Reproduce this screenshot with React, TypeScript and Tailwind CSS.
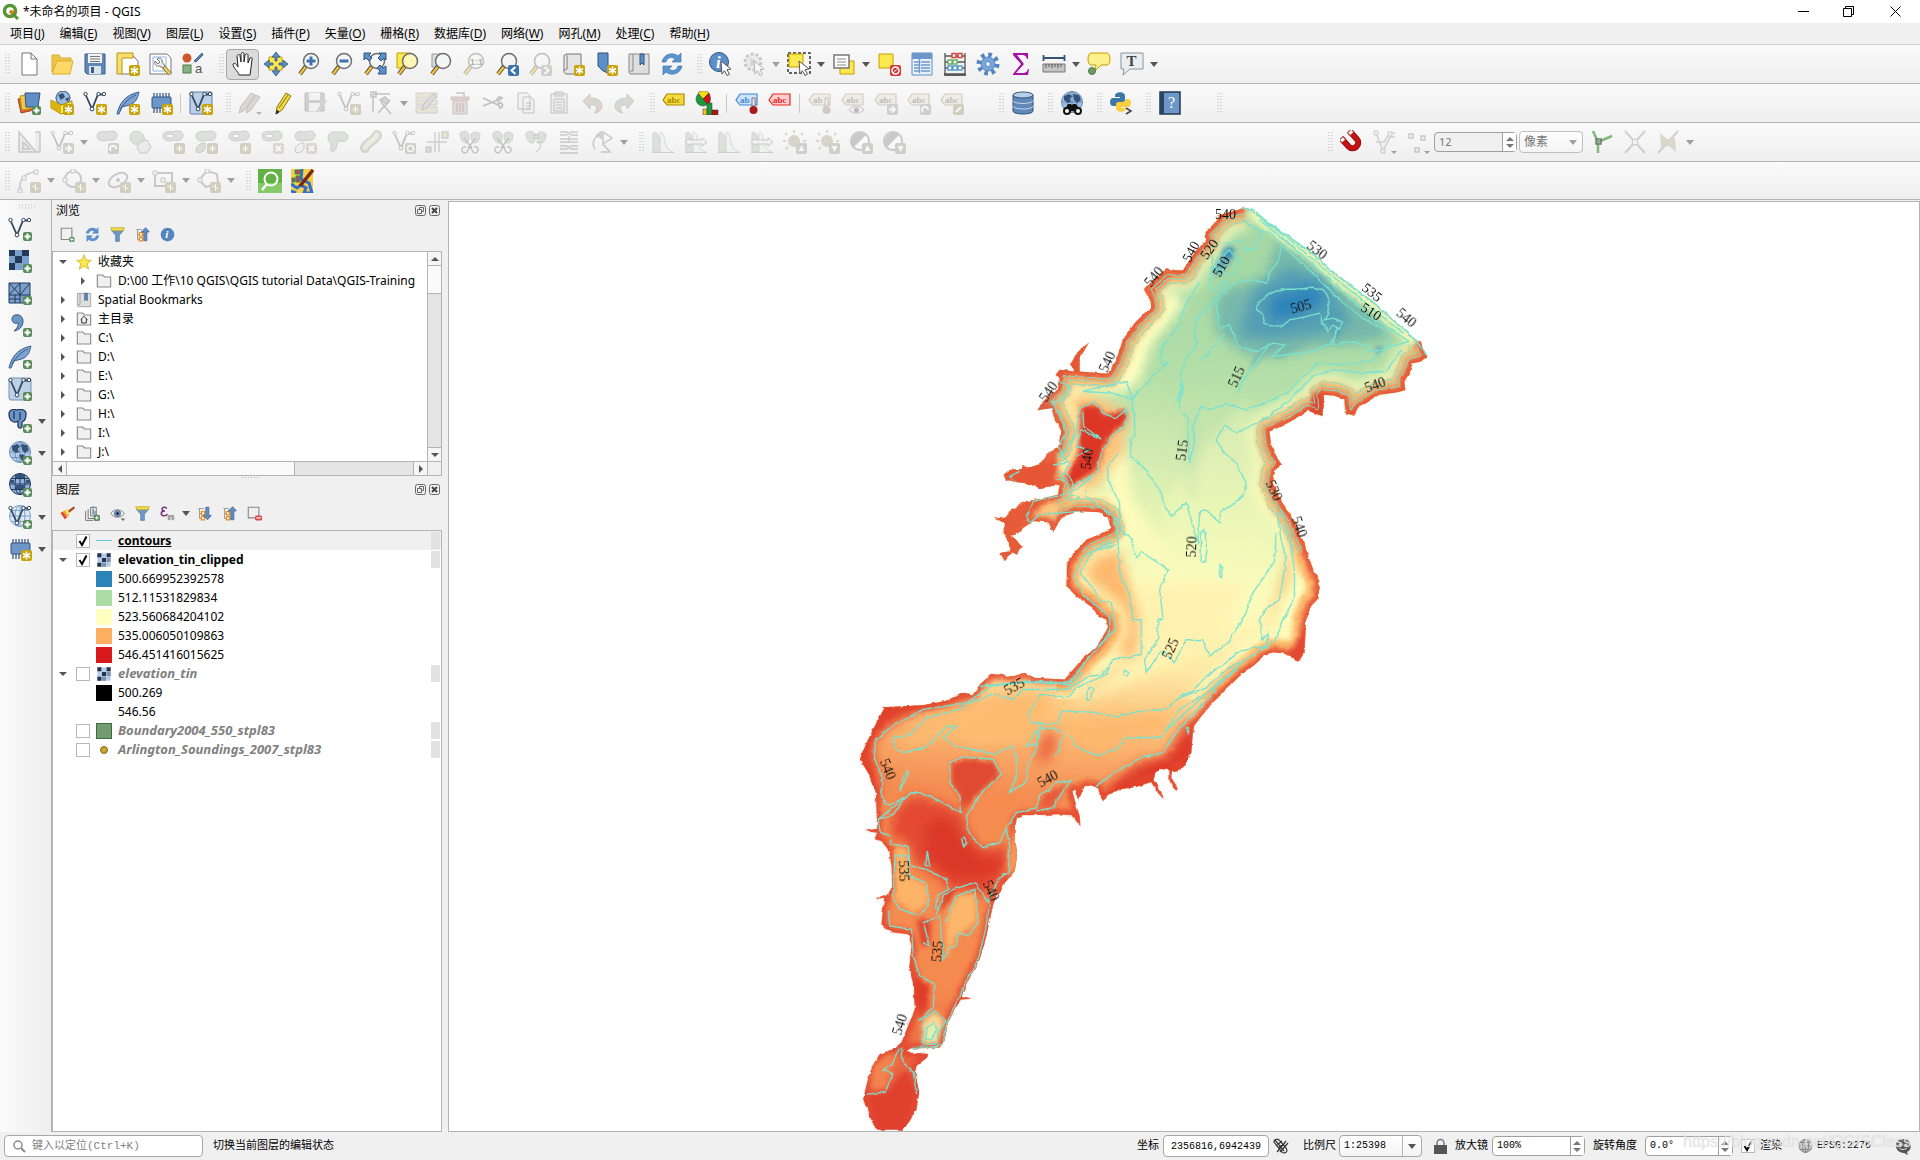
import { useState } from 'react';
import type { ReactNode } from 'react';

const Star = () => (
  <g>
    <rect x="13" y="13" width="11" height="11" rx="2" fill="#c8a30c" />
    <path d="M18.500 14.500v8M15 16.500l7 4M22 16.500l-7 4" stroke="#fff" strokeWidth="1.500" />
  </g>
);

const Plus = () => (
  <g>
    <rect x="15" y="15" width="9" height="9" rx="2" fill="#5a8c5a" />
    <path d="M19.500 16.500v6M16.500 19.500h6" stroke="#fff" strokeWidth="2" />
  </g>
);

const Box = ({ children, color = '#9a9a94' }: { children?: ReactNode; color?: string }) => (
  <g>
    <rect x="13" y="13" width="11" height="11" rx="2" fill={color} />
    {children}
  </g>
);

const Mag = ({ fill = '#f4f6f6' }: { fill?: string }) => (
  <g>
    <path d="M9 14l-6 8" stroke="#444" strokeWidth="4" />
    <path d="M8.500 15L3 22" stroke="#f5c236" strokeWidth="2.500" />
    <circle cx="14" cy="9" r="7.500" fill={fill} stroke="#6e6e6e" strokeWidth="1.500" />
  </g>
);

const Vee = ({ color = '#34495e' }: { color?: string }) => (
  <g fill="#fff" stroke={color}>
    <path d="M2.500 3.500L9 18l6-14.500 6 0" fill="none" strokeWidth="1.800" />
    <circle cx="2.500" cy="3" r="1.700" />
    <circle cx="9" cy="18" r="1.900" />
    <circle cx="15.500" cy="3" r="1.700" />
    <circle cx="21" cy="3" r="1.700" />
  </g>
);

const Feather = () => (
  <path d="M1 23C3 14 8 4 23 1c-1 4-2 9-7 12-4 2-8 2-10 3l-3 7zM4 19C8 12 13 7 20 4" fill="#7ba4d3" stroke="#3d5f88" />
);

const Chip = () => (
  <g>
    <path d="M5 2v20M8 2v20M11 2v20M14 2v20M17 2v20M20 2v20" stroke="#2f4e73" strokeWidth="1.200" />
    <rect x="3" y="6" width="19" height="11" rx="1" fill="#6d97c8" stroke="#34537a" />
  </g>
);

const Globe = ({ fill = '#9dbde0', line = '#34537a' }: { fill?: string; line?: string }) => (
  <g stroke={line} fill="none">
    <circle cx="12" cy="11" r="10.500" fill={fill} />
    <ellipse cx="12" cy="11" rx="5" ry="10.500" />
    <path d="M12 .5v21M1.500 11h21M3 5.500h18M3 16.500h18" />
  </g>
);

const Land = () => (
  <path d="M4 5l5-2 3 2-2 3 1 3-3 1-4-3zM13 3l6 1 2 5-4 3-3-3zM11 14l4-1 2 3-3 4z" fill="#34537a" />
);

const Tag = ({ fill = '#e6e2c8', stroke = '#9a9478', text = 'abc' }: { fill?: string; stroke?: string; text?: string }) => (
  <g>
    <path d="M1 9l4-6h17v11H5z" fill={fill} stroke={stroke} strokeWidth="1.200" />
    <text x="5" y="12" fontSize="9" fontFamily="Liberation Serif" fontWeight="bold" fill={stroke === '#9a9478' ? '#666' : stroke}>{text}</text>
  </g>
);

const Blob = () => <path d="M2 6c0-5 6-5 10-4 5-2 10-1 10 3 0 5-4 6-8 5C8 12 2 11 2 6z" fill="#b9beb9" stroke="#8f948f" />;
const Hist = () => (
  <g>
    <path d="M2 22V3c3-3 6 3 7 10s2 8 4 9z" fill="#b9c9b2" stroke="#999" />
    <path d="M9 22V3c3-2 4 3 5 9s4 9 8 10" fill="#eee" stroke="#aaa" />
    <path d="M1 22.500h22" stroke="#999" />
  </g>
);
const Sheet = () => <path d="M5 2h15v20H6c-4 0-4-5 0-5h0V4c-1-2-3-2-3 0v15" fill="#e4e4e4" stroke="#777" />;
const Cut = () => <path d="M6 8l8 10M18 8l-8 10M8 17a3 3 0 1 0 1 5l3-6 3 6a3 3 0 1 0 1-5" fill="none" stroke="#777" strokeWidth="1.300" />;
const Sync = () => (
  <g fill="#5b93cf" stroke="#4278b4" strokeWidth=".7">
    <path d="M2 10C3 3 12-1 18 4l3-3v9h-9l3-3C11 4 7 6 6 10z" />
    <path d="M22 14c-1 7-10 11-16 6l-3 3v-9h9l-3 3c4 3 8 1 9-3z" />
  </g>
);
const Cursor = () => <path d="M12 9l10 8-4 .7 2.500 4.500-2.500 1.300-2.500-4.800L13 22z" fill="#fff" stroke="#555" />;
const TreeIco = () => (
  <g>
    <path d="M2 4h9M4 4v16h5M4 12h5" stroke="#999" strokeWidth="1.500" fill="none" />
    <path d="M7 9h5v5H7zM7 17h5v5H7z" fill="#fff" stroke="#f08b1e" strokeWidth="2" />
  </g>
);

const icons: Record<string, ReactNode> = {
  new: <path d="M5 1h9l6 6v16H5zM14 1v6h6" fill="#fff" stroke="#777" />,
  open: (
    <g stroke="#dcae2c">
      <path d="M2 3h7l2 3h10v5H6L2 20z" fill="#efc449" />
      <path d="M7 9h16l-3 13H2z" fill="#fcd968" />
    </g>
  ),
  save: (
    <g>
      <path d="M2 2h20v20H4l-2-2z" fill="#5f87b7" stroke="#3d5f88" />
      <path d="M5 2h14v9H5z" fill="#f3f3f3" />
      <path d="M7 4.500h10M7 7h10M7 9.500h10" stroke="#777" />
      <path d="M6 14h12v8H6z" fill="#dde3ea" />
      <path d="M8 15h3v6H8z" fill="#3d5f88" />
    </g>
  ),
  layoutNew: (
    <g>
      <path d="M5 4h12l5 5v13H5z" fill="#fff" stroke="#777" />
      <path d="M1 1h16v5H6v16H1z" fill="#f5df73" stroke="#b8930d" />
      <Star />
    </g>
  ),
  layoutMgr: (
    <g>
      <path d="M1 2h17l4 4v16H1z" fill="#fff" stroke="#777" />
      <path d="M4 5h13v14H4z" fill="none" stroke="#8db0dd" />
      <path d="M13 13l8 9" stroke="#7a6a2a" strokeWidth="4" />
      <path d="M14 14l7 8" stroke="#f0cf57" strokeWidth="2.500" />
      <path d="M8 7l3 3-2 2-3-3c-1 3 1 6 5 5l3 2 2-2-3-4c1-3-2-5-5-3z" fill="#eee" stroke="#777" />
    </g>
  ),
  style: (
    <g>
      <circle cx="5" cy="6" r="4.500" fill="#cf5628" />
      <path d="M12 9l8-8 1 2-7 7z" fill="#5f87b7" stroke="#3d5f88" />
      <rect x="1" y="13" width="8" height="8" fill="#85b083" stroke="#4f7d4d" />
      <text x="13" y="21" fontSize="13" fontFamily="Liberation Sans" fill="#555">a</text>
    </g>
  ),
  hand: <path d="M8 23c-1-4-6-7-6-11 2-2 4 1 5 3L6 4c1-2 3-2 3 0l1 6V2c1-2 3-2 3 0v8l1-7c1-2 3-1 3 0v8l2-5c1-1 3 0 2 2l-2 15z" fill="#fff" stroke="#222" />,
  pan: (
    <g>
      <path d="M5 5h13v13H5z" fill="#fce94f" stroke="#c4a000" />
      <path d="M12 0l4 5h-3v4h-2V5H8zM12 24l4-5h-3v-4h-2v4H8zM0 12l5-4v3h4v2H5v3zM24 12l-5-4v3h-4v2h4v3z" fill="#5b8fc9" stroke="#34537a" strokeWidth=".8" />
    </g>
  ),
  zoomIn: <g><Mag /><path d="M14 4.500v9M9.500 9h9" stroke="#3f72ad" strokeWidth="3" /></g>,
  zoomOut: <g><Mag /><path d="M9.500 9h9" stroke="#3f72ad" strokeWidth="3" /></g>,
  zoomFull: (
    <g>
      <Mag />
      <path d="M1 1h7L6 3l3 3-3 3-3-3-2 2zM23 1h-7l2 2-3 3 3 3 3-3 2 2zM23 22h-8l2-3-3-3 3-3 3 3 3-2z" fill="#5b8fc9" stroke="#34537a" />
    </g>
  ),
  zoomSel: <g><path d="M1 1h14v15H1z" fill="#fce94f" stroke="#c4a000" /><Mag fill="#fdf6b8" /></g>,
  zoomLayer: <g><path d="M3 2h12v13H3z" fill="#ddd" stroke="#999" /><Mag /></g>,
  zoomNative: <g><Mag /><text x="8" y="12.500" fontSize="9" fontWeight="bold" fontFamily="Liberation Sans" fill="#444">1:1</text></g>,
  zoomLast: <g><Mag /><Box color="#3f72ad"><path d="M20.500 15l-4 3.500 4 3.500" stroke="#fff" strokeWidth="2" fill="none" /></Box></g>,
  zoomNext: <g><Mag /><Box><path d="M16.500 15l4 3.500-4 3.500" stroke="#fff" strokeWidth="2" fill="none" /></Box></g>,
  mapView: <g><Sheet /><Star /></g>,
  bookmarkNew: <g><path d="M4 1h10v20l-5-2-5-5z" fill="#5b8fc9" stroke="#34537a" /><Star /></g>,
  bookmarks: <g><path d="M2 2h20v20H4c-2 0-2-2-2-3zM6 2v17H3" fill="#dedede" stroke="#888" /><path d="M13 2h4v11l-2-2-2 2z" fill="#5b8fc9" stroke="#34537a" /></g>,
  refresh: <Sync />,
  identify: (
    <g>
      <circle cx="10" cy="10" r="9.500" fill="#5b8fc9" stroke="#34537a" />
      <text x="7" y="16" fontSize="17" fontWeight="bold" fontStyle="italic" fontFamily="Liberation Serif" fill="#fff">i</text>
      <Cursor />
    </g>
  ),
  action: (
    <g>
      <circle cx="11" cy="10" r="8" fill="#ddd" stroke="#888" strokeWidth="3" strokeDasharray="3 2" />
      <path d="M8 5l7 5-7 5z" fill="#aaa" />
      <Cursor />
    </g>
  ),
  select: (
    <g>
      <path d="M1 1h22v20H1z" fill="none" stroke="#333" strokeWidth="1.500" strokeDasharray="3 2" />
      <path d="M2 2h14v13H2z" fill="#fce94f" stroke="#c4a000" />
      <Cursor />
    </g>
  ),
  selectForm: (
    <g>
      <path d="M8 9h14v13H8z" fill="#fce94f" stroke="#c4a000" />
      <path d="M2 3h15v13H2z" fill="#fff" stroke="#777" strokeWidth="1.500" />
      <path d="M5 7h9M5 10h9M5 13h9" stroke="#888" />
    </g>
  ),
  deselect: (
    <g>
      <path d="M2 2h14v14H2z" fill="#fce94f" stroke="#c4a000" />
      <Box color="#d83a3a"><circle cx="18.500" cy="18.500" r="3.500" fill="none" stroke="#fff" strokeWidth="1.500" /><path d="M16 21l5-5" stroke="#fff" /></Box>
    </g>
  ),
  table: (
    <g>
      <path d="M2 1h20v22H2z" fill="#e9f0f8" stroke="#5b8fc9" />
      <path d="M2 1h20v6H2z" fill="#6d97c8" />
      <path d="M4 10h5M11 10h9M4 13h5M11 13h9M4 16h5M11 16h9M4 19h5M11 19h9M9.500 3v18" stroke="#6d97c8" strokeWidth="1.400" />
    </g>
  ),
  abacus: (
    <g>
      <path d="M2 1v22h20V1M2 4h20M2 10h20M2 16h20" fill="none" stroke="#555" strokeWidth="1.300" />
      <path d="M1 22.500h22" stroke="#555" strokeWidth="2.500" />
      <g fill="#fff" strokeWidth="1.500">
        <path d="M9 1.500h4v4H9zM15 1.500h4v4h-4z" stroke="#d4453c" />
        <path d="M5 8h4v4H5zM10 8h4v4h-4z" stroke="#6ab36a" />
        <path d="M5 14h4v4H5zM10 14h4v4h-4zM15 14h4v4h-4z" stroke="#5b9fc9" />
      </g>
    </g>
  ),
  gear: (
    <g>
      <circle cx="12" cy="12" r="9" fill="none" stroke="#5585bf" strokeWidth="5" strokeDasharray="3.530 3.530" />
      <circle cx="12" cy="12" r="7" fill="#7ba4d8" stroke="#5585bf" />
      <circle cx="12" cy="12" r="2.500" fill="#f4f4f4" stroke="#5585bf" />
    </g>
  ),
  sigma: <path d="M4 1h15v6h-1c-1-3-2-4-5-4H8l7 9-8 9h6c4 0 5-1 6-4h1l-1 6H4v-1l8-10-8-9z" fill="#a612a6" />,
  ruler: (
    <g>
      <path d="M1 6h22M1.500 3v6M22.500 3v6" stroke="#34537a" strokeWidth="1.800" />
      <path d="M1 12h22v8H1z" fill="#c4c4c4" stroke="#777" />
      <path d="M4 12v4M7 12v3M10 12v4M13 12v3M16 12v4M19 12v3" stroke="#555" />
    </g>
  ),
  tip: (
    <g>
      <path d="M4 1h16c4 0 4 12 0 12h-6l-6 6 1-6H4C0 13 0 1 4 1z" fill="#fbf08a" stroke="#c4a000" />
      <circle cx="5" cy="19" r="3.500" fill="#6a9b63" stroke="#4f7d4d" />
    </g>
  ),
  textNote: (
    <g>
      <path d="M1 1h22v16H10l-7 6 1-6H1z" fill="#e9eef2" stroke="#8a949c" />
      <text x="6.500" y="14" fontSize="15" fontWeight="bold" fontFamily="Liberation Serif" fill="#444">T</text>
    </g>
  ),
  dataSource: (
    <g>
      <path d="M1 8l13-3 3 14-13 3z" fill="#d9622f" stroke="#a8461e" />
      <path d="M3 5l13-2 2 14-13 2z" fill="#f2c84b" stroke="#b8930d" />
      <path d="M8 2h15l-2 14H9z" fill="#5f8fc6" stroke="#34537a" />
      <Plus />
    </g>
  ),
  geopackage: (
    <g>
      <circle cx="13" cy="7" r="7" fill="#9dbde0" stroke="#34537a" />
      <path d="M8 4l5-2 2 4-4 3zM15 8l4-2-1 5z" fill="#34537a" />
      <path d="M1 9l10 5 11-4v9l-11 4-10-6z" fill="#fce94f" stroke="#a88708" />
      <path d="M1 9l10 5v9l-10-6z" fill="#d9b310" />
      <Star />
    </g>
  ),
  shapeNew: <g><Vee /><Star /></g>,
  featherNew: <g><Feather /><Star /></g>,
  chipNew: <g><Chip /><Star /></g>,
  virtualNew: <g><rect x="1" y="1" width="22" height="22" rx="1" fill="#bcd0e8" stroke="#5b7fae" /><Vee /><Star /></g>,
  pencils: (
    <g stroke="#777">
      <path d="M1 22l2-7L13 2l4 2L7 19z" fill="#b9a9a9" />
      <path d="M8 22l2-7L18 4l4 2-9 13z" fill="#b9a9a9" />
      <path d="M18 21h6l-3 3z" fill="#555" stroke="none" />
    </g>
  ),
  pencil: <g stroke="#8f7412"><path d="M5 23l1-7L15 2l5 3-9 14z" fill="#f2da45" /><path d="M5 23l1-4 2 2z" fill="#333" stroke="#333" /><path d="M8 17L17 4" /></g>,
  saveEdit: <g><path d="M1 2h19v18H1z" fill="#999" stroke="#777" /><path d="M5 2h11v7H5zM5 12h11v8H5z" fill="#eee" /><path d="M12 22l2-5 7-9 2 2-7 9z" fill="#b99" /></g>,
  vertexAdd: <g><Vee color="#777" /><Box color="#a39a72"><path d="M18.500 15v7M15.500 17l6 3M21.500 17l-6 3" stroke="#fff" /></Box></g>,
  vertex: <g fill="none" stroke="#777" strokeWidth="1.500"><path d="M3 3h17M3 3v18M1 1h5v5H1zM8 22L20 9M11 11l10 12" /><path d="M10 9l5-3 4 4-2 3z" fill="#aaa" /></g>,
  modify: <g><path d="M1 2h21v5H1zM1 9h21v5H1zM1 16h21v6H1z" fill="#d0cfa8" stroke="#999" /><path d="M7 19l2-6L18 3l3 2-9 12z" fill="#bbb" stroke="#777" /></g>,
  trash: <g><path d="M3 6h18v3H3z" fill="#b99" stroke="#977" /><path d="M5 10h14v13H5z" fill="#cbb" stroke="#977" /><path d="M8 2h8v4M9 12v9M12 12v9M15 12v9" fill="none" stroke="#977" strokeWidth="1.500" /></g>,
  cutH: <path d="M2 7l15 7M2 15l15-6M17 13a2.500 2.500 0 1 1 2 4zM17 10a2.500 2.500 0 1 1 4-3z" fill="none" stroke="#777" strokeWidth="1.800" />,
  copy: <path d="M4 2h9l3 3v13H4zM9 6h8l3 3v13H9zM12 12h5M12 15h5M12 18h5" fill="#eee" stroke="#777" />,
  paste: <path d="M4 3h16v19H4zM8 1h8v4H8zM7 8h10v12H7zM9 11h6M9 14h6M9 17h6" fill="#e4e4e4" stroke="#777" />,
  undo: <path d="M3 10l7-7v4c8 0 12 3 12 9-1 4-5 6-8 6 3-3 5-9-4-8v4z" fill="#b5a797" stroke="#998c7c" />,
  redo: <path d="M21 10l-7-7v4C6 7 2 10 2 16c1 4 5 6 8 6-3-3-5-9 4-8v4z" fill="#a5ada5" stroke="#8c958c" />,
  label: <Tag fill="#f6dc3a" stroke="#a88708" />,
  diagram: (
    <g stroke="#333" strokeWidth=".5">
      <circle cx="8" cy="8" r="7" fill="#1e9a3c" />
      <path d="M8 8L3 2c3-3 8-3 11 0z" fill="#f6dc1a" />
      <path d="M8 8l6-6c2 4 2 9-1 12z" fill="#c91616" />
      <path d="M8 18h4v6H8z" fill="#f6c51a" /><path d="M12 12h5v12h-5z" fill="#1e9a3c" /><path d="M17 19h6v5h-6z" fill="#b11212" />
    </g>
  ),
  labelPin: <g><Tag fill="#cfe3fb" stroke="#3f86d8" text="ab" /><path d="M17 7h3v8h-3z" fill="#eee" stroke="#777" /><circle cx="18.500" cy="19" r="4" fill="#a81c1c" /></g>,
  labelRed: <Tag fill="#fbd0d0" stroke="#e22" />,
  labelOffPin: <g><Tag text="ab" /><path d="M17 7h3v8h-3z" fill="#eee" stroke="#777" /><circle cx="18.500" cy="19" r="4" fill="#a88" /></g>,
  labelEye: <g><Tag /><path d="M8 19c4-5 11-5 15 0-4 4-11 4-15 0z" fill="#eee" stroke="#777" /><circle cx="15.500" cy="19" r="2.500" fill="#666" /></g>,
  labelMove: <g><Tag /><Box><path d="M15 18.500h6M18 15.500l3 3-3 3" stroke="#fff" strokeWidth="2" fill="none" /></Box></g>,
  labelRot: <g><Tag /><Box><path d="M16 21a3 3 0 1 1 5-2" stroke="#fff" strokeWidth="2" fill="none" /></Box></g>,
  labelEdit: <g><Tag /><Box color="#a39a72"><path d="M16 21l5-5" stroke="#fff" strokeWidth="2" /></Box></g>,
  db: (
    <g stroke="#34537a">
      <path d="M2 4v16c0 4 20 4 20 0V4" fill="#5f87b7" />
      <ellipse cx="12" cy="4" rx="10" ry="3" fill="#b9cfe8" />
      <path d="M2 9.500c0 4 20 4 20 0M2 15c0 4 20 4 20 0" fill="none" stroke="#c3d6ec" />
    </g>
  ),
  metasearch: (
    <g>
      <Globe line="#6d8fb8" />
      <Land />
      <path d="M4 20l4-7h3l1 2 1-2h3l5 7z" fill="#111" />
      <circle cx="7" cy="20" r="3" fill="#fff" stroke="#111" strokeWidth="2" /><circle cx="18" cy="20" r="3" fill="#fff" stroke="#111" strokeWidth="2" />
    </g>
  ),
  python: (
    <g>
      <path d="M6 5c0-5 10-5 10 0v5c0 3-9 0-9 5H4c-4 0-4-8 0-8h7V6H6z" fill="#3b77a8" />
      <path d="M17 8h2c4 0 4 8 0 8h-7v1h5c0 5-10 5-10 0v-4c0-4 10 0 10-5z" fill="#fbcf3f" />
      <path d="M17 17l5 3-5 3" stroke="#444" strokeWidth="1.500" fill="none" />
    </g>
  ),
  help: (
    <g>
      <path d="M2 1h20v22H2z" fill="#6d97c8" stroke="#23374f" strokeWidth="1.500" />
      <path d="M2 1h4v22H2z" fill="#2b4565" />
      <text x="10" y="17" fontSize="16" fontFamily="Liberation Serif" fill="#fff">?</text>
    </g>
  ),
  setsquare: <path d="M2 2l17 20H2zM6 12l7 7H6zM18 2h5v20h-4" fill="#ddd" stroke="#888" strokeWidth="1.500" />,
  moveFeat: <g><Vee color="#777" /><Box><path d="M15 18.500h6M18 15.500l3 3-3 3" stroke="#fff" strokeWidth="2" fill="none" /></Box></g>,
  rotFeat: <g><Blob /><Box><path d="M16 21a3 3 0 1 1 5-2" stroke="#fff" strokeWidth="2" fill="none" /></Box></g>,
  simplify: <g><path d="M2 7c0-7 12-8 14 0s-1 9-6 8-8-3-8-8z" fill="#b9beb9" stroke="#8f948f" /><path d="M12 12l7-2 4 7-4 6h-7l-3-6z" fill="#ddd" stroke="#888" /></g>,
  addRing: <g><Blob /><ellipse cx="9" cy="6" rx="4" ry="2" fill="#fff" stroke="#888" /><Box color="#a39a72"><path d="M18.500 15v7M15.500 17l6 3M21.500 17l-6 3" stroke="#fff" /></Box></g>,
  addPart: <g><Blob /><path d="M2 21c0-5 4-8 9-8v6c-2 4-9 5-9 2z" fill="#b9beb9" stroke="#888" /><Box color="#a39a72"><path d="M18.500 15v7M15.500 17l6 3M21.500 17l-6 3" stroke="#fff" /></Box></g>,
  delRing: <g><Blob /><ellipse cx="9" cy="6" rx="4" ry="2" fill="#fff" stroke="#888" /><Box color="#baa"><path d="M16 16l5 5M21 16l-5 5" stroke="#fff" strokeWidth="2" /></Box></g>,
  delPart: <g><Blob /><path d="M2 21c0-5 4-8 9-8v6c-2 4-9 5-9 2z" fill="#eee" stroke="#888" /><Box color="#baa"><path d="M16 16l5 5M21 16l-5 5" stroke="#fff" strokeWidth="2" /></Box></g>,
  reshape: <path d="M2 8c1-9 9-5 13-6s8 3 7 6-5 4-9 3c-3 0-1 6-4 9s-5 1-4-3-3-5-3-9z" fill="#b9beb9" stroke="#8f948f" />,
  offset: <g><path d="M6 18C8 12 16 11 18 5" stroke="#a8a890" strokeWidth="10" strokeLinecap="round" /><path d="M6 18C8 12 16 11 18 5" stroke="#deded0" strokeWidth="5" strokeLinecap="round" /></g>,
  rotPoint: <g><Vee color="#777" /><Box><circle cx="18.500" cy="18.500" r="3" fill="none" stroke="#fff" strokeWidth="1.500" /></Box></g>,
  trim: <g stroke="#999" strokeWidth="1.500"><path d="M10 2v20M14 2v20M2 12h20" /><path d="M17 2h6v6h-6z" fill="#cc9" /><path d="M1 17h5v5H1z" fill="#caa" /></g>,
  split: <g><path d="M2 4c0-4 9-3 9 1s0 8-3 8-6-4-6-9zM13 5c0-4 9-4 9 0s-2 8-5 8-4-4-4-8z" fill="#b9beb9" stroke="#999" /><Cut /></g>,
  merge: <g><path d="M2 4c0-4 9-3 9 1s0 8-3 8-6-4-6-9zM13 5c0-4 9-4 9 0s-2 8-5 8-4-4-4-8z" fill="#b9beb9" stroke="#999" /><path d="M12 12c6 0 6 6 0 10M9 5h6M9 8h6" stroke="#777" fill="none" /></g>,
  align: <path d="M3 2h6c3 0 3 3 0 3H3M21 2h-6c-3 0-3 3 0 3h6M3 9h18M3 12h18M12 6v6M3 16h6c3 0 3 3 0 3H3M21 16h-6c-3 0-3 3 0 3h6M3 23h18" stroke="#888" fill="none" strokeWidth="1.300" />,
  rotSym: <path d="M10 5a9 9 0 0 0-5 14M11 2v6l-4-3zM13 2l9 6-9 6zM11 22h9l-7-8" fill="none" stroke="#888" strokeWidth="1.500" />,
  hist: <Hist />,
  histArrow: <g><Hist /><path d="M1 12l5-4v2h12V8l5 4-5 4v-2H6v2z" fill="#eee" stroke="#888" /></g>,
  sunUp: <g><circle cx="11" cy="11" r="6" fill="#aaa88a" /><path d="M11 0v3M2 3l2 2M20 3l-2 2M0 11h3M3 19l2-2M20 11h3" stroke="#aaa88a" strokeWidth="2" /><Box><path d="M18.500 15l3 6h-6z" fill="#fff" /></Box></g>,
  sunDown: <g><circle cx="11" cy="11" r="6" fill="#aaa88a" /><path d="M11 0v3M2 3l2 2M20 3l-2 2M0 11h3M3 19l2-2M20 11h3" stroke="#aaa88a" strokeWidth="2" /><Box><path d="M18.500 22l3-6h-6z" fill="#fff" /></Box></g>,
  conUp: <g><circle cx="11" cy="11" r="9" fill="#fff" stroke="#888" strokeWidth="2" /><path d="M5 17A8.500 8.500 0 0 1 17 5z" fill="#888" /><Box><path d="M18.500 15l3 6h-6z" fill="#fff" /></Box></g>,
  conDown: <g><circle cx="11" cy="11" r="9" fill="#fff" stroke="#888" strokeWidth="2" /><path d="M5 17A8.500 8.500 0 0 1 17 5z" fill="#888" /><Box><path d="M18.500 22l3-6h-6z" fill="#fff" /></Box></g>,
  magnet: (
    <g transform="rotate(-42 12 12)">
      <path d="M4 3v10a8 8 0 0 0 16 0V3h-5v10a3 3 0 0 1-6 0V3z" fill="#cb1212" stroke="#8a0a0a" />
      <path d="M4 2h5v4H4zM15 2h5v4h-5z" fill="#fff" stroke="#a33" />
    </g>
  ),
  snapV: <g><path d="M3 3l7 18 7-14h5M3 12l8 0 6-9h5" stroke="#999" fill="none" strokeWidth="1.500" /><path d="M1 1h4v4H1zM15 2h4v4h-4zM8 19h4v4H8z" fill="#eee" stroke="#888" /><path d="M18 21h6l-3 3z" fill="#222" /></g>,
  snapDots: <g><path d="M3 4h4v4H3zM15 6h4v4h-4zM9 18h4v4H9z" fill="#eee" stroke="#888" strokeWidth="1.500" /><path d="M18 21h6l-3 3z" fill="#222" /></g>,
  topo: <g><path d="M3 1l5 11v11M8 12l14-6" stroke="#7db87d" strokeWidth="2.500" fill="none" /><path d="M6 9h5v5H6z" fill="none" stroke="#777" strokeWidth="1.500" /></g>,
  cross: <g><path d="M2 1l20 22M22 1L2 23" stroke="#999" strokeWidth="2" /><circle cx="12" cy="12" r="3" fill="#eee" stroke="#888" /></g>,
  self: <g><path d="M22 1L2 23" stroke="#999" strokeWidth="2" /><path d="M4 3l7 6 8-1 1 14-7-6-8 1z" fill="#b5ae8c" /></g>,
  curve: <g><path d="M3 21C2 10 8 4 19 3" fill="none" stroke="#888" strokeWidth="1.500" /><path d="M1 20h4v4H1zM5 7h4v4H5zM17 1h4v4h-4z" fill="#eee" stroke="#888" /><Box color="#a39a72"><path d="M18.500 15v7M15.500 17l6 3" stroke="#fff" /></Box></g>,
  circle: <g><circle cx="11" cy="10" r="8" fill="none" stroke="#888" strokeWidth="2" /><path d="M9 0h4v4H9zM1 9h4v4H1z" fill="#eee" stroke="#888" /><Box color="#a39a72"><path d="M18.500 15v7M15.500 17l6 3" stroke="#fff" /></Box></g>,
  ellipse: <g><ellipse cx="11" cy="11" rx="10" ry="6" transform="rotate(-30 11 11)" fill="none" stroke="#888" strokeWidth="2" /><circle cx="11" cy="11" r="2" fill="#888" /><Box color="#a39a72"><path d="M18.500 15v7M15.500 17l6 3" stroke="#fff" /></Box></g>,
  rect: <g><path d="M3 4h17v13H3z" fill="none" stroke="#888" strokeWidth="2" /><path d="M1 2h4v4H1zM9 9h4v4H9z" fill="#eee" stroke="#888" /><Box color="#a39a72"><path d="M18.500 15v7M15.500 17l6 3" stroke="#fff" /></Box></g>,
  polygon: <g><path d="M10 2l10 3 1 9-12 4-7-7z" fill="none" stroke="#888" strokeWidth="2" /><path d="M8 0h4v4H8zM1 9h4v4H1z" fill="#eee" stroke="#888" /><Box color="#a39a72"><path d="M18.500 15v7M15.500 17l6 3" stroke="#fff" /></Box></g>,
  osmSearch: <g><path d="M0 0h24v24H0z" fill="#62b146" /><path d="M0 14h24v10H0z" fill="#86c96a" /><circle cx="13" cy="10" r="6.500" fill="none" stroke="#fff" strokeWidth="2" /><path d="M9 15l-5 6" stroke="#fff" strokeWidth="2.500" /></g>,
  osmEdit: (
    <g>
      <path d="M0 0h22v24H0z" fill="#f5cf45" />
      <path d="M0 15l6 4 4-3 5 3-2 5h8l-3-10-8-4 1-10M0 22l5 2" fill="none" stroke="#2f6fd0" strokeWidth="3" />
      <path d="M1 9h3v4H1zM5 7h4v6H5zM4 1h6v4H4z" fill="#c33b7a" stroke="#1d9a3d" />
      <path d="M9 17L22 1" stroke="#7a2a10" strokeWidth="3.500" />
    </g>
  ),
  vecAdd: <g><Vee /><Plus /></g>,
  rasAdd: <g><path d="M1 1h20v20H1z" fill="#7ba0cc" /><path d="M1 1h6v6H1zM14 1h7v6h-7zM7 7h7v7H7zM1 14h6v7H1z" fill="#22395a" /><Plus /></g>,
  meshAdd: <g><path d="M1 2h21v20H1z" fill="#7ba0cc" stroke="#22395a" /><path d="M1 14h21M12 2v20M1 2l11 12M12 2L1 14M22 2L12 14M7 14v8M1 18h11" stroke="#22395a" fill="none" /><Plus /></g>,
  comma: <g><path d="M4 6c0-6 11-6 11 2 0 6-4 9-9 10 3-3 5-5 4-8-3 1-6 0-6-4z" fill="#6d97c8" stroke="#34537a" /><Plus /></g>,
  featherAdd: <g><Feather /><Plus /></g>,
  virtAdd: <g><rect x="1" y="1" width="22" height="22" rx="2" fill="#bcd0e8" stroke="#7b93b0" /><Vee /><Plus /></g>,
  pgAdd: <g><path d="M1 5c0-5 5-5 8-4 4-1 9-1 9 4 0 4-1 7-4 8v5c-1 2-4 1-4-1v-5c-5 3-9-1-9-7zM6 2v8M12 3v8" fill="#6d97c8" stroke="#22395a" strokeWidth="1.300" /><Plus /></g>,
  wmsAdd: <g><Globe fill="#b3cbe8" line="#6d8fb8" /><Land /><Plus /></g>,
  wcsAdd: <g><Globe fill="#8fb3dc" line="#22395a" /><path d="M7 1h10v4H7zM2 7h4v3H2zM18 7h4v3h-4zM8 12h8v4H8z" fill="#34537a" /><Plus /></g>,
  wfsAdd: <g><Globe fill="#dfe9f5" line="#7ba0cc" /><Vee /><Plus /></g>,
  addSmall: <g><path d="M2 2h17v18H2z" fill="none" stroke="#888" strokeWidth="1.800" /><circle cx="19" cy="20" r="4.500" fill="#5a8c5a" /><path d="M19 17v6M16 20h6" stroke="#fff" strokeWidth="1.500" /></g>,
  filter: <g><path d="M2 5h20l-7 8v10h-6V13z" fill="#6d97c8" stroke="#4a73a5" /><path d="M1 1h22l-2 5H3z" fill="#f2d94a" stroke="#b8a020" /></g>,
  collapse: <g><TreeIco /><path d="M17 1l6 7h-4v14h-5V8h-4z" fill="#5b8fc9" stroke="#34537a" /></g>,
  expand: <g><TreeIco /><path d="M17 22l6-7h-4V2h-5v13h-4z" fill="#5b8fc9" stroke="#34537a" /></g>,
  info: <g><circle cx="12" cy="12" r="11" fill="#5585bf" /><text x="8.500" y="18" fontSize="18" fontWeight="bold" fontStyle="italic" fontFamily="Liberation Serif" fill="#fff">i</text></g>,
  brush: <g><path d="M1 11l8-5 6 8-7 7z" fill="#f0a63a" /><path d="M1 11l7 10 3-3-7-9z" fill="#d9483a" /><path d="M8 7l5-3 4 7-5 3z" fill="#f7e26b" /><path d="M14 9l9-7" stroke="#a8461e" strokeWidth="3.500" /></g>,
  group: <g><path d="M1 8v15h12M5 5v15h11V8M9 2v14h9V2z" fill="none" stroke="#777" strokeWidth="1.600" /><path d="M13 5v9M13 1v3" stroke="#3f72ad" strokeWidth="2" /><rect x="14" y="14" width="10" height="10" rx="3" fill="#5a8c5a" /><path d="M19 16v6M16 19h6" stroke="#fff" strokeWidth="1.500" /></g>,
  eye: <g><path d="M1 12C6 4 18 4 23 12c-5 8-17 8-22 0z" fill="#eee" stroke="#888" strokeWidth="1.500" /><circle cx="12" cy="12" r="5" fill="#6d97c8" stroke="#34537a" /><circle cx="12" cy="12" r="2" fill="#111" /><path d="M17 20h7l-3 4z" fill="#666" /></g>,
  eps: <g><path d="M11 4C7 0 1 3 4 7c1 1 2 1 4 1-4 0-6 1-6 4 0 4 7 5 10 1" fill="none" stroke="#7a3a7a" strokeWidth="2.500" /><path d="M13 22v-7h9v7h-3v-5h-3v5z" fill="#aaa" stroke="#888" /></g>,
  remove: <g><path d="M2 2h17v17H2z" fill="none" stroke="#888" strokeWidth="1.800" /><rect x="13" y="15" width="11" height="8" rx="2" fill="#e04848" /><path d="M15 19h7" stroke="#fff" strokeWidth="2" /></g>,
  star: <path d="M12 1l3 8 8 .5-6 5 2 8.500-7-5-7 5 2-8.500-6-5L9 9z" fill="#fbe94f" stroke="#c8a30c" />,
  folder: <path d="M2 3h8l3 3h9v15H2z" fill="#f0f0f0" stroke="#8a8a8a" strokeWidth="1.700" />,
  home: <g><path d="M2 3h8l3 3h9v15H2z" fill="#f0f0f0" stroke="#8a8a8a" strokeWidth="1.700" /><path d="M7 13l5-5 5 5M8.500 12v6h7v-6" fill="none" stroke="#333" strokeWidth="1.500" /></g>,
  raster: (
    <g>
      <path d="M2 2h20v20H2z" fill="#b5cbe6" />
      <path d="M2 2h6v6H2zM16 2h6v6h-6zM9 9h6v6H9zM2 16h6v6H2z" fill="#25344d" />
      <path d="M16 9h6v6h-6zM9 16h6v6H9z" fill="#7c92b0" />
    </g>
  ),
};

function Icon({ name, size = 24, off = false }: { name: string; size?: number; off?: boolean }) {
  return (
    <svg width={size} height={size} viewBox="0 0 24 24" fill="none" className={off ? 'opacity-40' : ''} aria-hidden="true">
      {icons[name]}
    </svg>
  );
}

const Caret = ({ light = false }: { light?: boolean }) => (
  <svg width="8" height="5" viewBox="0 0 8 5" aria-hidden="true">
    <path d="M0 0h8L4 5z" fill={light ? '#a0a0a0' : '#555'} />
  </svg>
);

const Grip = () => (
  <svg width="6" height="20" viewBox="0 0 6 20" className="shrink-0" aria-hidden="true">
    <path d="M1 0v20M4 0v20" stroke="#b4b4b4" strokeDasharray="1 2" />
  </svg>
);

// items: "name", "name-" = disabled, "name>" = with drop-down arrow, "|" = separator
function Tools({ items }: { items: string[] }) {
  return (
    <div className="flex items-center">
      <div className="flex w-[9px] shrink-0 justify-center"><Grip /></div>
      {items.map((item, i) => {
        if (item === '|') return <div key={i} className="flex w-[7px] justify-center"><div className="h-[19px] w-px bg-[#c8c8c8]" /></div>;
        const off = item.includes('-');
        const name = item.replace(/[->]/g, '');
        return (
          <button
            key={i}
            aria-label={name}
            className={`flex h-[31px] shrink-0 items-center ${name === 'hand' ? 'rounded-sm border border-[#a8a8a8] bg-[#dcdcdc]' : ''}`}
          >
            <span className={`flex justify-center ${name === 'hand' ? 'w-[31px]' : 'w-[33px]'}`}><Icon name={name} off={off} /></span>
            {item.includes('>') && <span className="flex w-3 justify-center"><Caret light={off} /></span>}
          </button>
        );
      })}
    </div>
  );
}

const Bar = ({ children, height = 'h-[39px]' }: { children: ReactNode; height?: string }) => (
  <div className={`flex items-center gap-[7px] border-b border-[#b4b4b4] bg-gradient-to-b from-[#fafafa] to-[#efefef] pl-[3px] ${height}`}>{children}</div>
);

const menus = [
  ['项目', 'J'], ['编辑', 'E'], ['视图', 'V'], ['图层', 'L'], ['设置', 'S'], ['插件', 'P'], ['矢量', 'O'],
  ['栅格', 'R'], ['数据库', 'D'], ['网络', 'W'], ['网孔', 'M'], ['处理', 'C'], ['帮助', 'H'],
];

function Header() {
  return (
    <header>
      <div className="flex h-[23px] items-center bg-white pl-[2px] text-xs">
        <svg width="17" height="17" viewBox="0 0 17 17" aria-hidden="true">
          <circle cx="8" cy="8" r="5.500" fill="none" stroke="#589632" strokeWidth="3.500" />
          <path d="M8 8l8 8" stroke="#589632" strokeWidth="3" />
          <path d="M8 7l5 1-4 4z" fill="#ee7913" />
        </svg>
        <h1 className="ml-1">*未命名的项目 - QGIS</h1>
        <div className="ml-auto flex">
          <button aria-label="最小化" className="flex h-5 w-[45px] items-center justify-center"><svg width="11" height="11"><path d="M0 5.500h11" stroke="#000" /></svg></button>
          <button aria-label="还原" className="flex h-5 w-[45px] items-center justify-center"><svg width="11" height="11" fill="none" stroke="#000"><path d="M.5 2.500h8v8h-8zM2.500 2.500v-2h8v8h-2" /></svg></button>
          <button aria-label="关闭" className="flex h-5 w-[49px] items-center justify-center"><svg width="11" height="11" stroke="#000"><path d="M.5.5l10 10M10.500.5l-10 10" /></svg></button>
        </div>
      </div>
      <nav className="flex h-[22px] items-center gap-px border-b border-[#d2d2d2] bg-[#f0f0f0] pl-[3px] text-xs">
        {menus.map(([label, key]) => (
          <button key={key} className="px-[7px]">{label}(<u className="underline-offset-2">{key}</u>)</button>
        ))}
      </nav>
      <Bar>
        <Tools items={['new', 'open', 'save', 'layoutNew', 'layoutMgr', 'style']} />
        <Tools items={['hand', 'pan', 'zoomIn', 'zoomOut', 'zoomFull', 'zoomSel', 'zoomLayer', 'zoomNative-', 'zoomLast', 'zoomNext-', 'mapView', 'bookmarkNew', 'bookmarks', 'refresh']} />
        <Tools items={['identify', 'action->', 'select>', 'selectForm>', 'deselect', 'table', 'abacus', 'gear', 'sigma', 'ruler>', 'tip', 'textNote>']} />
      </Bar>
      <Bar>
        <Tools items={['dataSource', 'geopackage', 'shapeNew', 'featherNew', 'chipNew', '|', 'virtualNew']} />
        <Tools items={['pencils-', 'pencil', 'saveEdit-', 'vertexAdd-', 'vertex->', 'modify-', 'trash-', 'cutH-', 'copy-', 'paste-', 'undo-', 'redo-']} />
        <Tools items={['label', 'diagram', '|', 'labelPin', 'labelRed', '|', 'labelOffPin-', 'labelEye-', 'labelMove-', 'labelRot-', 'labelEdit-']} />
        <div className="ml-[22px] flex gap-[7px]">
          <Tools items={['db']} />
          <Tools items={['metasearch']} />
          <Tools items={['python']} />
          <Tools items={['help']} />
        </div>
        <div className="ml-[22px]"><Tools items={[]} /></div>
      </Bar>
      <Bar>
        <Tools items={['setsquare-', 'moveFeat->', 'rotFeat-', 'simplify-', 'addRing-', 'addPart-', 'addRing-', 'delRing-', 'delPart-', 'reshape-', 'offset-', 'rotPoint-', 'trim-', 'split-', 'split-', 'merge-', 'align-', 'rotSym->']} />
        <Tools items={['hist-', 'histArrow-', 'hist-', 'histArrow-', 'sunUp-', 'sunDown-', 'conUp-', 'conDown-']} />
        <div className="mr-[224px] ml-auto flex items-center">
          <Tools items={['magnet', 'snapV-', 'snapDots-']} />
          <Spin label="捕捉容差" value="12" className="h-5 w-[83px] bg-[#f0f0f0] text-[11px] text-[#777]" />
          <Combo label="单位" value="像素" light className="mx-[2px] h-[22px] w-[64px] border-[#c0c0c0] text-[#777]" />
          <div className="-ml-[9px] flex"><Tools items={['topo', 'cross-', 'self->']} /></div>
        </div>
      </Bar>
      <Bar height="h-[38px]">
        <Tools items={['curve->', 'circle->', 'ellipse->', 'rect->', 'polygon->']} />
        <Tools items={['osmSearch', 'osmEdit']} />
      </Bar>
    </header>
  );
}

function Spin({ label, value, className }: { label: string; value: string; className: string }) {
  const [text, setText] = useState(value);
  return (
    <div className={`flex items-stretch rounded-sm border border-[#a0a0a0] ${className}`}>
      <input aria-label={label} value={text} onChange={(e) => setText(e.target.value)} className="min-w-0 flex-1 bg-transparent px-1 outline-none" />
      <div className="flex w-[14px] flex-col items-center justify-center gap-[3px] border-l border-[#a0a0a0] bg-white">
        <button aria-label={`${label} +`}><svg width="8" height="4" className="block"><path d="M0 4l4-4 4 4z" fill="#777" /></svg></button>
        <button aria-label={`${label} -`}><svg width="8" height="4" className="block"><path d="M0 0l4 4 4-4z" fill="#777" /></svg></button>
      </div>
    </div>
  );
}

interface ComboProps {
  label: string;
  value: string;
  className: string;
  line?: boolean;
  light?: boolean;
}

function Combo({ label, value, className, line = false, light = false }: ComboProps) {
  return (
    <div className={`relative rounded-sm border bg-gradient-to-b from-white to-[#f4f4f4] ${className}`}>
      <select aria-label={label} className="h-full w-full appearance-none bg-transparent px-1 outline-none">
        <option>{value}</option>
      </select>
      <span className={`pointer-events-none absolute inset-y-0 right-0 flex w-[19px] items-center justify-center ${line ? 'border-l border-[#b4b4b4]' : ''}`}><Caret light={light} /></span>
    </div>
  );
}

function Check({ id, checked = false }: { id: string; checked?: boolean }) {
  return (
    <span className="relative block h-[14px] w-[14px] shrink-0">
      <input id={id} type="checkbox" defaultChecked={checked} className="peer block h-[14px] w-[14px] appearance-none border border-[#b8b8b8] bg-white" />
      <svg width="14" height="14" viewBox="0 0 14 14" fill="none" className="pointer-events-none absolute inset-0 hidden peer-checked:block">
        <path d="M3.500 7l2.500 4 4.500-8.500" stroke="#000" strokeWidth="2" />
      </svg>
    </span>
  );
}

const side = ['vecAdd', 'rasAdd', 'meshAdd', 'comma', 'featherAdd', 'virtAdd', 'pgAdd>', 'wmsAdd>', 'wcsAdd', 'wfsAdd>', 'chipNew>'];

function SideBar() {
  return (
    <aside className="flex w-[51px] shrink-0 flex-col bg-gradient-to-r from-[#fafafa] to-[#efefef]">
      <div className="flex h-[13px] items-center pl-[19px]">
        <svg width="17" height="5"><path d="M0 1h17M0 4h17" stroke="#b4b4b4" strokeDasharray="1 2" /></svg>
      </div>
      {side.map((s) => (
        <button key={s} aria-label={s.replace('>', '')} className="flex h-8 items-center gap-[6px] pl-2">
          <Icon name={s.replace('>', '')} />
          {s.includes('>') && <Caret />}
        </button>
      ))}
    </aside>
  );
}

function DockTitle({ title }: { title: string }) {
  return (
    <div className="flex h-[21px] items-center pr-2 pl-1 text-xs">
      <h2>{title}</h2>
      <button aria-label={`${title} 浮动`} className="ml-auto">
        <svg width="11" height="11" fill="none" stroke="#666" className="block"><rect x=".5" y=".5" width="10" height="10" rx="2" /><path d="M2.500 4.500h4v4h-4zM4.500 4.500v-2h4v4h-2" /></svg>
      </button>
      <button aria-label={`${title} 关闭`} className="ml-[3px]">
        <svg width="11" height="11" fill="none" stroke="#666" className="block"><rect x=".5" y=".5" width="10" height="10" rx="2" /><path d="M3 3l5 5M8 3l-5 5" strokeWidth="2" stroke="#444" /></svg>
      </button>
    </div>
  );
}

function DockTools({ items }: { items: string[] }) {
  return (
    <div className="flex h-[30px] items-center pb-[3px] pl-[3px]">
      {items.map((s) => (
        <button key={s} aria-label={s.replace('>', '')} className="flex items-center">
          <span className="flex w-[25px] justify-center"><Icon name={s.replace('>', '')} size={15} /></span>
          {s.includes('>') && <span className="flex w-3 justify-center"><Caret /></span>}
        </button>
      ))}
    </div>
  );
}

const Twist = ({ open }: { open: boolean }) => (
  <svg width="8" height="8" viewBox="0 0 8 8" aria-hidden="true"><path d={open ? 'M0 2h8L4 6z' : 'M2 0v8l4-4z'} fill="#555" /></svg>
);

const places = [
  { name: '收藏夹', icon: 'star', open: true },
  { name: 'D:\\00 工作\\10 QGIS\\QGIS tutorial Data\\QGIS-Training', icon: 'folder', child: true },
  { name: 'Spatial Bookmarks', icon: 'bookmarks' },
  { name: '主目录', icon: 'home' },
  ...['C', 'D', 'E', 'G', 'H', 'I', 'J'].map((d) => ({ name: `${d}:\\`, icon: 'folder' })),
] as { name: string; icon: string; open?: boolean; child?: boolean }[];

function ScrollBtn({ d, label }: { d: string; label: string }) {
  return (
    <button aria-label={label} className="flex h-[13px] w-[13px] shrink-0 items-center justify-center bg-[#f6f6f6]">
      <svg width="8" height="8"><path d={d} fill="#555" /></svg>
    </button>
  );
}

function Browser() {
  return (
    <section>
      <DockTitle title="浏览" />
      <DockTools items={['addSmall', 'refresh', 'filter', 'collapse', 'info']} />
      <div className="mr-[6px] border border-[#b4b4b4] bg-white">
        <div className="flex">
          <ul className="min-w-0 flex-1 overflow-hidden">
            {places.map((p) => (
              <li key={p.name} className={`flex h-[19px] items-center whitespace-nowrap ${p.child ? 'pl-5' : ''}`}>
                <button aria-label="展开" className="flex w-5 shrink-0 justify-center"><Twist open={!!p.open} /></button>
                <span className="mr-[6px] ml-[3px] shrink-0"><Icon name={p.icon} size={16} /></span>
                {p.name}
              </li>
            ))}
          </ul>
          <div className="flex w-[14px] flex-col border-l border-[#b4b4b4] bg-[#e4e4e4]">
            <ScrollBtn label="向上" d="M0 6l4-4 4 4z" />
            <div className="h-[29px] border-y border-[#b4b4b4] bg-[#fafafa]" />
            <div className="mt-auto border-t border-[#b4b4b4]"><ScrollBtn label="向下" d="M0 2l4 4 4-4z" /></div>
          </div>
        </div>
        <div className="flex border-t border-[#b4b4b4] bg-[#e4e4e4]">
          <ScrollBtn label="向左" d="M6 0v8L2 4z" />
          <div className="w-[229px] border-x border-[#b4b4b4] bg-[#fafafa]" />
          <div className="ml-auto border-x border-[#b4b4b4]"><ScrollBtn label="向右" d="M2 0v8l4-4z" /></div>
          <div className="w-[13px] bg-[#f0f0f0]" />
        </div>
      </div>
    </section>
  );
}

const Swatch = ({ className }: { className: string }) => <span className={`block w-4 ${className}`} />;

interface Layer {
  name: string;
  symbol: ReactNode;
  layer?: boolean;
  open?: boolean;
  checked?: boolean;
  style?: string;
}

const hiddenStyle = 'text-[13px] font-bold italic text-[#808080]';

const layers: Layer[] = [
  { name: 'contours', symbol: <Swatch className="h-px bg-[#72c8d8]" />, layer: true, checked: true, style: 'font-bold underline' },
  { name: 'elevation_tin_clipped', symbol: <Icon name="raster" size={16} />, layer: true, open: true, checked: true, style: 'font-bold' },
  { name: '500.669952392578', symbol: <Swatch className="h-4 bg-[#2b83ba]" /> },
  { name: '512.11531829834', symbol: <Swatch className="h-4 bg-[#abdda4]" /> },
  { name: '523.560684204102', symbol: <Swatch className="h-4 bg-[#ffffbf]" /> },
  { name: '535.006050109863', symbol: <Swatch className="h-4 bg-[#fdae61]" /> },
  { name: '546.451416015625', symbol: <Swatch className="h-4 bg-[#d7191c]" /> },
  { name: 'elevation_tin', symbol: <Icon name="raster" size={16} />, layer: true, open: true, style: hiddenStyle },
  { name: '500.269', symbol: <Swatch className="h-4 bg-black" /> },
  { name: '546.56', symbol: <Swatch className="h-4 bg-white" /> },
  { name: 'Boundary2004_550_stpl83', symbol: <Swatch className="h-4 border border-[#3f6b40] bg-[#729b6f]" />, layer: true, style: hiddenStyle },
  { name: 'Arlington_Soundings_2007_stpl83', symbol: <span className="mx-1 block h-2 w-2 rounded-full border border-[#7a6526] bg-[#c9a634]" />, layer: true, style: hiddenStyle },
];

function Layers() {
  return (
    <section className="flex min-h-0 flex-1 flex-col">
      <DockTitle title="图层" />
      <DockTools items={['brush', 'group', 'eye', 'filter', 'eps>', 'expand', 'collapse', 'remove']} />
      <ul className="mr-[6px] flex-1 border border-[#b4b4b4] bg-white">
        {layers.map((l, i) => (
          <li key={l.name} className={`flex h-[19px] items-center pr-px whitespace-nowrap ${i === 0 ? 'bg-[#f0f0f0]' : ''}`}>
            <span className="flex w-[23px] justify-center pr-[3px]">{l.open && <button aria-label="折叠" className="flex"><Twist open /></button>}</span>
            <span className="mr-[6px] w-[14px]">{l.layer && <Check id={l.name} checked={l.checked} />}</span>
            <span className="mr-[6px] w-4">{l.symbol}</span>
            {l.layer ? <label htmlFor={l.name} className={l.style}>{l.name}</label> : <span>{l.name}</span>}
            {l.layer && <span className="ml-auto h-[17px] w-[9px] bg-[#e2e2e2]" />}
          </li>
        ))}
      </ul>
    </section>
  );
}

// lake shore, clockwise from the east end of the dam to its west end
const shore =
  '1310,422 1325,425 1330,445 1345,468 1325,485 1300,490 1290,520 1275,545 1278,570 1250,578 1200,585 1165,605 1135,625 1125,648 1098,640 1095,598 1068,588 1030,585 1033,620 1028,650 1005,640 985,632 960,650 925,670 895,685 870,695 875,735 890,770 905,792 885,820 880,850 905,905 935,945 955,990 975,1030 990,1080 1000,1105 1020,1145 1018,1195 995,1220 980,1260 978,1300 975,1360 955,1390 930,1365 880,1358 855,1370 820,1400 780,1430 740,1470 700,1510 670,1545 643,1580 638,1620 635,1660 620,1695 600,1712 577,1715 575,1735 595,1765 590,1775 570,1745 570,1712 540,1708 528,1720 522,1740 540,1770 555,1795 550,1797 530,1775 515,1748 470,1762 420,1770 390,1785 370,1805 362,1790 355,1765 335,1758 315,1760 302,1790 295,1800 285,1770 278,1775 290,1820 300,1850 302,1880 275,1847 235,1845 180,1847 130,1847 112,1855 105,1880 105,1900 112,1970 105,2015 80,2045 60,2080 42,2110 30,2160 20,2210 0,2280 -35,2345 -55,2390 -25,2398 -57,2401 -75,2430 -95,2470 -105,2520 -120,2545 -210,2548 -220,2560 -155,2565 -158,2575 -190,2600 -195,2620 -182,2680 -190,2730 -210,2765 -230,2792 -312,2792 -335,2740 -350,2700 -338,2650 -325,2605 -300,2565 -260,2550 -235,2530 -215,2480 -195,2430 -198,2360 -212,2310 -205,2240 -215,2205 -270,2198 -295,2175 -287,2095 -315,2100 -300,2092 -275,2085 -263,2060 -265,2000 -272,1955 -295,1925 -315,1920 -308,1900 -345,1895 -308,1888 -312,1780 -335,1720 -360,1680 -340,1630 -310,1570 -285,1523 -170,1517 -105,1505 -48,1480 -20,1485 0,1455 35,1423 100,1430 135,1420 165,1435 255,1440 315,1370 355,1335 385,1285 380,1260 355,1250 340,1225 290,1190 260,1160 262,1095 280,1065 320,1020 370,1000 395,988 385,955 360,938 300,935 250,950 235,970 222,998 205,968 160,965 130,985 115,1000 95,1008 130,1040 118,1050 112,1066 98,1058 75,1085 62,1060 90,1055 88,1030 72,1000 72,970 42,952 75,958 95,930 140,905 195,895 235,885 240,855 180,865 140,850 80,845 72,825 90,810 130,808 128,795 145,805 185,792 205,760 235,745 245,690 222,650 215,625 172,632 195,600 235,565 240,540 228,525 240,510 280,515 275,490 290,460 328,428 300,475 300,515 385,522 410,480 430,420 465,370 515,320 510,290 490,270 560,205 580,210 610,212 640,165 680,120 678,95 710,65 720,45 792,25';
const dam = '820,27 850,55 920,105 1000,160 1060,215 1120,262 1180,305 1230,350 1285,398 1310,422';

const north = [
  '828,322 845,305 860,290 885,275 920,268 960,268 1000,262 1035,270 1050,300 1045,340 1035,360 1065,355 1092,368 1080,388 1060,375 1048,395 1030,370 1020,340 980,350 930,360 910,378 870,378 855,370 850,345 828,322',
  '905,135 900,175 885,200 870,215 865,250 820,240 780,245 745,265 710,305 715,350 720,385 750,375 760,400 775,440 830,455 880,430 915,435 880,470 960,460 1000,455 1055,430 1075,380 1060,435 1100,425 1160,435 1165,455 1210,450 1235,430 1210,385 1150,355 1070,290 980,200 905,135',
  '700,165 690,240 700,275 745,240 735,265 690,315 650,360 645,420 655,430 625,470 605,520 610,580 590,610 605,555 600,625 625,660 628,790 645,730 640,680 665,620 690,630 740,612 800,630 870,605 920,580 985,520 1010,490 1100,495 1180,480 1230,440 1290,425',
  '790,60 840,92 870,98 900,130',
  '735,130 780,120 800,150 825,145 845,95',
  '660,245 615,320 600,370 550,440 545,490 555,500 565,485 490,560 455,600 465,655 465,710 452,720 455,770 500,810 545,880 555,920 575,950 590,935 620,910 640,975 655,1035 660,940 680,930 710,960 722,970 725,935 760,915 790,890 800,850 790,830 770,790 735,760 710,720 735,675 770,700 850,660 920,610 1000,530 1060,510 1150,520 1220,515 1265,450',
  '745,150 780,180 765,225 700,205 735,165 745,150',
  '665,485 710,430 735,400',
  '770,580 800,530 850,460 870,430',
  '920,465 950,460 965,475',
  '840,60 940,140 1060,250 1180,355 1260,405 1290,425',
  '830,45 950,135 1080,245 1190,335 1270,400',
  '310,575 400,580 460,600 440,545 370,560 310,575',
  '665,1085 665,1000 675,990 682,1050 678,1085 665,1085',
  '418,760 385,800 385,840 420,910 420,990 460,1020',
  '245,770 290,700 300,625 345,605 370,640 410,655 440,630 440,670 390,715 365,760 350,820 270,865 245,830 270,790',
  '310,640 312,680 365,718 305,690 290,740 330,750 290,770',
  '265,890 285,885 300,892 285,902 265,895',
  '320,870 320,890 370,930 410,960 415,1020',
  '240,545 270,560 250,600 215,605 240,640 260,700 235,740 265,790 220,795',
  '395,985 360,945 300,935 180,945 150,970 140,950 160,905 230,890 290,870 340,830',
  '120,815 90,830 110,848',
];
const middle = [
  '890,-20 885,65 820,160 800,220 745,310 690,350 670,305 620,300 585,370 560,340 540,340 500,400 495,360 535,300 535,240 550,235 540,150 567,90 545,75 485,38 470,55 455,0',
  '890,-100 905,0 920,60 900,180 865,205 840,240 850,300 865,280 860,320 780,335 740,370 680,410 640,455 600,470',
  '905,-90 930,0 945,90 945,175 915,235 885,305 860,320 790,365 700,450 600,510 555,580',
  '415,0 420,95 450,165 460,240 485,240 485,345 400,360 370,405 330,410 265,450',
  '410,15 340,35 300,100 345,150 360,185 395,190 408,270 340,340 270,430',
  '395,5 310,50 283,110 310,165 390,230 390,280 265,430 150,425 0,440',
  '720,110 722,75 728,85 726,115 720,110',
  '430,405 435,392 448,400 440,412 430,405',
  '322,460 330,443 340,450 332,480 322,482 322,460',
  '620,565 630,565 626,582 620,565',
];
const south = [
  '690,75 560,68 455,80 380,130 250,150 150,205 110,240 100,290 125,350 125,410 145,440 200,410 160,465 115,480 120,515 150,530 155,555 205,560 210,620 260,630 320,660 325,690 295,710 290,750',
  '210,225 160,235 165,265 190,280 260,262 320,200 350,200 310,235 345,260 400,270 465,285 515,258 530,290 530,350 510,400 560,365 565,310 590,270 600,210 575,235 560,260 590,255 600,190 575,190 565,165 600,105 685,112 720,80 800,45 810,20',
  '210,225 260,175 340,155 455,105 520,120 550,90 680,90 730,40',
  '330,310 370,292 460,300 485,345 430,395 380,470 385,520 430,565 480,550 500,505 530,460 590,445 600,410 650,370 695,362 660,410 640,445 590,455',
  '330,310 330,370 360,410 365,460 290,420 240,400 215,400 115,480',
  '180,395 190,350 208,332 180,395',
  '165,590 205,590 205,650 260,670 265,740 240,770 180,750 160,720 165,590',
  '290,765 310,710 340,690 405,670 445,730 475,660 505,640 510,560 500,510',
  '315,790 350,710 405,690 415,790 385,830 355,820 350,860 325,870 310,905 300,770 250,790 270,860 250,850',
  '145,755 150,800 215,810 220,890 240,950 285,975 280,1045 235,1085',
  '250,1155 250,1080 285,1055 318,1085 295,1120 290,1155 250,1155',
  '262,1105 285,1090 290,1110 275,1142 258,1140 262,1105',
  '180,1165 155,1220 130,1230 160,1245 135,1300 80,1305',
  '185,1165 190,1210 220,1240 230,1305',
  '365,540 372,533 383,550 372,563 365,540',
  '258,620 262,575 270,620 258,620',
  '600,190 610,210 640,205 668,220 660,270 645,290',
  '655,190 665,155 760,158 830,172 900,155 980,150 1020,115 1100,85 1150,40 1200,5',
  '690,225 715,265 770,288 830,270 860,235 960,235 1000,195 1060,140 1140,65 1200,25',
  '770,380 840,330 910,292 970,280 1010,220 1060,165 1130,90',
  '600,190 625,195 655,190',
  '450,735 435,820 415,900 380,965 345,1040 322,1090 310,1150 290,1163 215,1165',
];

// text, x, y, rotation
const marks: [string, number, number, number][] = [
  ['540', 738, 45, 0], ['540', 635, 155, -62], ['520', 690, 148, -55], ['510', 726, 200, -60], ['540', 525, 232, -50],
  ['530', 1012, 152, 38], ['535', 1178, 278, 38], ['510', 1175, 336, 32], ['540', 1280, 355, 40], ['505', 965, 322, -15],
  ['515', 773, 532, -65], ['540', 385, 487, -65], ['540', 208, 577, -55], ['540', 1188, 557, -20], ['515', 610, 752, -82],
  ['540', 325, 778, -82], ['530', 882, 873, 65], ['540', 958, 982, 70], ['520', 638, 1042, -88], ['525', 575, 1348, -65],
  ['535', 105, 1463, -28], ['540', 205, 1740, -28], ['540', -278, 1710, 68], ['535', -230, 2015, 88], ['540', 32, 2075, 65],
  ['535', -125, 2257, -85], ['540', -238, 2477, -72],
];

function MapCanvas() {
  return (
    <svg viewBox="-1593 6 4413 2790" preserveAspectRatio="xMidYMin meet" className="absolute inset-0 h-full w-full" role="img" aria-label="elevation_tin_clipped">
      <defs>
        <clipPath id="lake"><polygon points={`${shore} ${dam}`} /></clipPath>
        <clipPath id="upper"><rect x="230" y="0" width="1200" height="1500" /></clipPath>
        <linearGradient id="depth" gradientUnits="userSpaceOnUse" x1="500" y1="200" x2="250" y2="2792">
          <stop offset="0" stopColor="#a6d8a5" />
          <stop offset=".12" stopColor="#b4dfa8" />
          <stop offset=".2" stopColor="#cfe9b0" />
          <stop offset=".29" stopColor="#e6f5b5" />
          <stop offset=".37" stopColor="#fdfdbd" />
          <stop offset=".46" stopColor="#fee9a6" />
          <stop offset=".53" stopColor="#fdc27a" />
          <stop offset=".62" stopColor="#f58e53" />
          <stop offset=".85" stopColor="#f58a50" />
          <stop offset="1" stopColor="#e5523a" />
        </linearGradient>
        <filter id="b8" x="-30%" y="-30%" width="160%" height="160%"><feGaussianBlur stdDeviation="8" /></filter>
        <filter id="b20" x="-50%" y="-50%" width="200%" height="200%"><feGaussianBlur stdDeviation="18" /></filter>
        <filter id="rough" filterUnits="userSpaceOnUse" x="-420" y="0" width="1820" height="2800">
          <feTurbulence type="fractalNoise" baseFrequency=".05" numOctaves="2" seed="4" />
          <feDisplacementMap in="SourceGraphic" scale="10" xChannelSelector="R" yChannelSelector="G" />
        </filter>
        {[28, 50, 74].map((w) => (
          <mask key={w} id={`ring${w}`} maskUnits="userSpaceOnUse" x="230" y="0" width="1200" height="1400">
            <polyline points={shore} fill="none" stroke="#fff" strokeWidth={w + 6} strokeLinejoin="round" />
            <polyline points={shore} fill="none" stroke="#000" strokeWidth={w} strokeLinejoin="round" />
          </mask>
        ))}
      </defs>
      <g filter="url(#rough)">
        <g clipPath="url(#lake)">
          <rect x="-420" y="0" width="1820" height="2800" fill="url(#depth)" />
          <g filter="url(#b20)">
            <polygon points="740,270 860,230 895,120 960,160 1180,345 1240,410 1150,430 1020,440 880,470 790,460 710,390 705,310" fill="#76b8aa" />
            <polygon points="830,260 930,200 1040,230 1120,370 1020,400 880,420 780,410 800,320" fill="#559fb4" />
            <polygon points="870,290 1000,250 1045,300 960,350 870,370" fill="#2f85bb" />
            <polygon points="620,620 650,620 650,900 630,900" fill="#b9e0aa" />
            <polygon points="560,900 800,600 840,800 900,1100 740,1340 500,1100 560,1000" fill="#fbfdbd" opacity=".35" />
            <polygon points="620,300 520,420 470,560 380,560 530,330 560,280" fill="#fdfdbf" />
            <polygon points="430,700 460,900 560,1050 540,1100 420,1000 380,850" fill="#fdfbbb" />
            <polygon points="250,530 440,640 430,760 300,920 80,1040 60,820 220,760" fill="#fdc37a" />
            <polygon points="300,1040 410,1030 480,1250 470,1370 380,1350 400,1240 280,1120" fill="#fdb96e" />
            <polygon points="880,1240 960,1080 950,950 900,920 930,1060 900,1160 850,1300" fill="#fdb96e" />
            <polygon points="480,1150 600,1150 800,1150 700,1350 450,1450 260,1530 480,1380" fill="#fff2b0" />
          </g>
          <g fill="none" strokeLinejoin="round">
            <g clipPath="url(#upper)">
              <polyline points={shore} stroke="#ffffbf" strokeWidth="130" filter="url(#b20)" opacity=".7" />
              <polyline points={shore} stroke="#fdb163" strokeWidth="80" filter="url(#b8)" opacity=".9" />
            </g>
            <polyline points={shore} stroke="#e2452f" strokeWidth="30" filter="url(#b8)" opacity=".85" />
            <polyline points={dam} stroke="#e9f5b4" strokeWidth="50" filter="url(#b8)" />
            <polyline points={dam} stroke="#f0b080" strokeWidth="6" />
          </g>
          <g filter="url(#b8)">
            <polygon points="735,140 760,135 768,160 745,195 715,230 700,215" fill="#65aab2" />
            <polygon points="735,150 758,148 760,170 742,180" fill="#2b7fb9" />
            <polygon points="820,480 860,440 870,445 810,510" fill="#6fb3ac" />
            <polygon points="1070,370 1085,390 1060,430" fill="#4f9bb4" />
            <polygon points="1190,440 1215,440 1195,468" fill="#4f9bb4" />
            <polygon points="880,470 950,420 970,430 900,475" fill="#74b6ab" />
            <polygon points="305,620 350,615 375,645 440,630 440,665 385,715 350,810 270,865 258,835 295,760" fill="#dd3426" />
            <polygon points="60,820 130,800 190,790 225,755 235,800 230,850 170,870 80,850" fill="#e65536" />
            <polygon points="40,950 90,930 150,900 200,900 150,960 110,1000 140,1040 60,1090 60,1000" fill="#e65a38" />
            <polygon points="1000,580 1034,580 1034,650 1005,640 985,630" fill="#e2472f" />
            <polygon points="560,200 590,215 515,290 490,270" fill="#ec6a42" />
            <polygon points="980,1280 985,1360 955,1395 925,1365" fill="#e34a32" />
          </g>
          <g transform="translate(-420 1380)">
            <g filter="url(#b20)">
              <polygon points="40,300 120,120 350,110 420,70 385,125 240,150 140,205 95,250 120,400 100,400" fill="#e0402c" />
              <polygon points="180,240 330,170 470,110 600,100 640,130 560,250 400,265 330,230 190,270" fill="#fdbb70" />
              <polygon points="650,190 980,160 1020,120 960,220 860,230 780,280 700,240" fill="#fdb96e" />
              <polygon points="780,400 900,310 980,290 1050,170 1080,300 980,350 850,400" fill="#de3827" />
              <polygon points="620,215 655,220 640,290 590,320 600,250" fill="#ea6640" />
              <polygon points="160,460 215,405 290,425 370,460 390,530 430,565 510,560 500,640 440,710 330,690 290,650 220,610 205,550 150,530" fill="#e34a33" />
              <polygon points="260,490 320,470 390,560 440,600 500,600 490,640 400,660 310,650 260,580" fill="#dc3829" />
            </g>
            <g filter="url(#b8)">
              <polygon points="335,310 380,298 460,305 480,345 430,390 380,440 370,460 360,410 335,370" fill="#e04a33" />
              <polygon points="395,480 440,410 520,400 510,470 490,480 480,540 430,555" fill="#f68c50" />
              <polygon points="165,565 203,565 205,650 262,680 262,735 220,760 165,720" fill="#fdb468" />
              <polygon points="320,780 350,710 405,700 410,790 350,830 320,900" fill="#fdb76c" />
              <polygon points="290,760 320,690 350,690 330,730" fill="#df4430" />
              <polygon points="230,780 275,780 270,860 245,860" fill="#e04630" />
              <polygon points="220,900 240,960 270,980 265,1040 240,1080 225,1010" fill="#de3c2b" />
              <polygon points="590,445 620,400 690,370 660,410 640,445" fill="#e75a3a" />
              <polygon points="510,570 530,480 540,600 525,640 500,650" fill="#f8995a" />
              <polygon points="248,1155 248,1085 285,1058 315,1085 292,1155" fill="#f8d692" />
              <polygon points="258,1150 260,1100 292,1092 285,1145" fill="#dff2b4" />
              <polygon points="85,1310 140,1300 200,1230 230,1300 190,1412 110,1412" fill="#e0402d" />
              <polygon points="90,1290 100,1220 150,1180 170,1200 135,1290" fill="#f3834d" />
            </g>
          </g>
          <g fill="none" stroke="#78e2d0" strokeWidth="4">
            {[28, 50, 74].map((w) => (
              <rect key={w} x="230" y="0" width="1200" height="1060" fill="#84dcc4" stroke="none" mask={`url(#ring${w})`} />
            ))}
            {north.map((p) => <polyline key={p} points={p} />)}
            <g transform="translate(0 1020)">{middle.map((p) => <polyline key={p} points={p} />)}</g>
            <g transform="translate(-420 1380)">{south.map((p) => <polyline key={p} points={p} />)}</g>
          </g>
        </g>
        <polyline points={`792,25 ${dam} 1345,470`} fill="none" stroke="#7be3d0" strokeWidth="5" />
      </g>
      <g fontFamily="Liberation Serif" fontSize="42" fill="#111" textAnchor="middle">
        {marks.map(([t, x, y, r]) => <text key={`${x},${y}`} transform={`translate(${x} ${y}) rotate(${r})`} y="13">{t}</text>)}
      </g>
    </svg>
  );
}

function StatusBar() {
  return (
    <footer className="relative flex h-7 shrink-0 items-center pl-1 font-['Liberation_Mono','Noto_Sans_CJK_SC',monospace] text-[11px]">
      <div className="flex h-[22px] w-[199px] items-center rounded-sm border border-[#a8a8a8] bg-white pl-2">
        <svg width="13" height="13" fill="none" stroke="#8a8a8a" strokeWidth="1.500" className="mr-[6px] shrink-0"><circle cx="5" cy="5" r="4" /><path d="M8 8l4 4" strokeWidth="2" /></svg>
        <input aria-label="定位" placeholder="键入以定位(Ctrl+K)" className="min-w-0 flex-1 outline-none placeholder:text-[#808080]" />
      </div>
      <span className="ml-[10px]">切换当前图层的编辑状态</span>
      <div className="ml-auto flex items-center pr-2">
        <label htmlFor="coord">坐标</label>
        <input id="coord" defaultValue="2356816,6942439" className="ml-1 h-[22px] w-[106px] rounded-sm border border-[#a8a8a8] bg-white text-center text-[10px] outline-none" />
        <button aria-label="切换范围" className="ml-1 w-[17px]">
          <svg width="16" height="16" viewBox="0 0 16 16" fill="none" stroke="#333" className="block"><path d="M1 4c0-3 4-4 6-1l6 7c3 4-2 7-5 3zM3 8l6-5M5 10l6-4M2 2l9 11M13 3l-9 11M15 5l-8 9" strokeWidth="1.200" /></svg>
        </button>
        <span className="ml-[13px]">比例尺</span>
        <Combo label="比例尺" value="1:25398" line className="ml-[3px] h-[22px] w-[83px] border-[#a8a8a8] text-[10px]" />
        <button aria-label="锁定" className="ml-3">
          <svg width="13" height="16" viewBox="0 0 13 16" className="block"><path d="M3 8V5a3.500 3.500 0 0 1 7 0v3" fill="none" stroke="#777" strokeWidth="1.500" /><path d="M0 7h13v9H0z" fill="#555" /></svg>
        </button>
        <span className="ml-2">放大镜</span>
        <Spin label="放大镜" value="100%" className="ml-1 h-5 w-[93px] bg-white text-[10px]" />
        <span className="ml-2">旋转角度</span>
        <Spin label="旋转角度" value="0.0°" className="ml-2 h-5 w-[88px] bg-white text-[10px]" />
        <span className="ml-2"><Check id="render" checked /></span>
        <label htmlFor="render" className="ml-[5px]">渲染</label>
        <button className="ml-4 flex items-center text-[10px]">
          <svg width="15" height="15" viewBox="0 0 24 24" className="mr-1"><Globe fill="#ccc" line="#666" /></svg>
          EPSG:2276
        </button>
        <button aria-label="消息" className="ml-6">
          <svg width="17" height="17" viewBox="0 0 17 17" className="block"><path d="M8 1c9 0 10 11 4 13l1 3-4-2C-1 15-2 1 8 1z" fill="#555" /><circle cx="5" cy="7" r="1.500" fill="#ddd" /><circle cx="11" cy="7" r="1.500" fill="#ddd" /><path d="M4 10c2 2 6 2 8 0" stroke="#ddd" fill="none" /></svg>
        </button>
      </div>
      <span className="pointer-events-none absolute top-0 right-[9px] font-['Liberation_Sans',sans-serif] text-base leading-5 text-white/45 [text-shadow:0_0_1px_#ccc]">https://blog.csdn.net/QGISClass</span>
    </footer>
  );
}

export default function App() {
  return (
    <div className="flex h-screen flex-col overflow-hidden bg-[#f0f0f0] font-['Noto_Sans','Noto_Sans_CJK_SC',sans-serif] text-xs text-black">
      <Header />
      <main className="flex min-h-0 flex-1">
        <SideBar />
        <div className="flex w-[397px] shrink-0 flex-col border-l border-[#b4b4b4]">
          <Browser />
          <div className="flex h-[3px] items-center justify-center"><svg width="17" height="3"><path d="M0 1.500h17" stroke="#b4b4b4" strokeDasharray="1 2" /></svg></div>
          <Layers />
        </div>
        <div className="relative mt-px flex-1 border border-[#b4b4b4] bg-white">
          <MapCanvas />
        </div>
      </main>
      <StatusBar />
    </div>
  );
}
